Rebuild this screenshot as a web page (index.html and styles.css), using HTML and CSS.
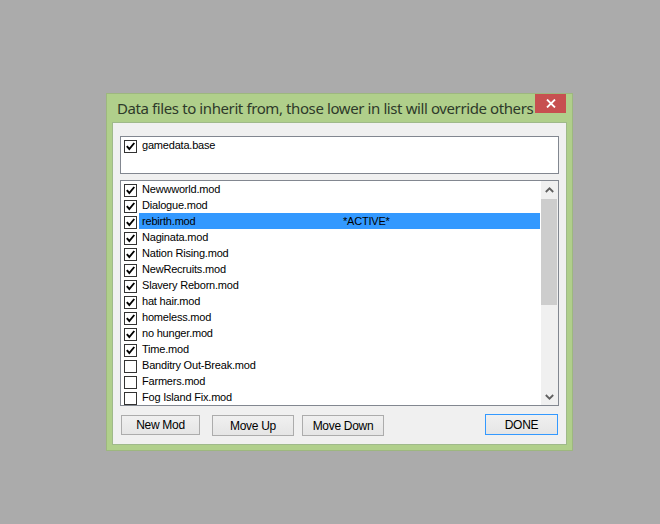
FILE: index.html
```html
<!DOCTYPE html>
<html>
<head>
<meta charset="utf-8">
<title>Data files</title>
<link rel="stylesheet" href="styles.css">
</head>
<body>
<div class="window">
  <div class="titlebar">
    <span class="title">Data files to inherit from, those lower in list will override others</span>
    <span class="close"><svg width="10" height="9" viewBox="0 0 10 9"><path d="M1 0.5 L9 8.5 M9 0.5 L1 8.5" stroke="#fff" stroke-width="1.8" fill="none"/></svg></span>
  </div>
  <div class="client">
    <div class="listbox base">
      <div class="row"><span class="cb"><svg width="11" height="11" viewBox="0 0 11 11"><path d="M1.8 5.2 L4.3 8 L9.3 2" stroke="#000" stroke-width="1.9" fill="none"/></svg></span><span class="label"><span class="name">gamedata.base</span></span></div>
    </div>
    <div class="listbox mods">
      <div class="rows">
        <div class="row"><span class="cb"><svg width="11" height="11" viewBox="0 0 11 11"><path d="M1.8 5.2 L4.3 8 L9.3 2" stroke="#000" stroke-width="1.9" fill="none"/></svg></span><span class="label"><span class="name">Newwworld.mod</span></span></div>
        <div class="row"><span class="cb"><svg width="11" height="11" viewBox="0 0 11 11"><path d="M1.8 5.2 L4.3 8 L9.3 2" stroke="#000" stroke-width="1.9" fill="none"/></svg></span><span class="label"><span class="name">Dialogue.mod</span></span></div>
        <div class="row"><span class="cb"><svg width="11" height="11" viewBox="0 0 11 11"><path d="M1.8 5.2 L4.3 8 L9.3 2" stroke="#000" stroke-width="1.9" fill="none"/></svg></span><span class="label selected"><span class="name">rebirth.mod</span><span class="status">*ACTIVE*</span></span></div>
        <div class="row"><span class="cb"><svg width="11" height="11" viewBox="0 0 11 11"><path d="M1.8 5.2 L4.3 8 L9.3 2" stroke="#000" stroke-width="1.9" fill="none"/></svg></span><span class="label"><span class="name">Naginata.mod</span></span></div>
        <div class="row"><span class="cb"><svg width="11" height="11" viewBox="0 0 11 11"><path d="M1.8 5.2 L4.3 8 L9.3 2" stroke="#000" stroke-width="1.9" fill="none"/></svg></span><span class="label"><span class="name">Nation Rising.mod</span></span></div>
        <div class="row"><span class="cb"><svg width="11" height="11" viewBox="0 0 11 11"><path d="M1.8 5.2 L4.3 8 L9.3 2" stroke="#000" stroke-width="1.9" fill="none"/></svg></span><span class="label"><span class="name">NewRecruits.mod</span></span></div>
        <div class="row"><span class="cb"><svg width="11" height="11" viewBox="0 0 11 11"><path d="M1.8 5.2 L4.3 8 L9.3 2" stroke="#000" stroke-width="1.9" fill="none"/></svg></span><span class="label"><span class="name">Slavery Reborn.mod</span></span></div>
        <div class="row"><span class="cb"><svg width="11" height="11" viewBox="0 0 11 11"><path d="M1.8 5.2 L4.3 8 L9.3 2" stroke="#000" stroke-width="1.9" fill="none"/></svg></span><span class="label"><span class="name">hat hair.mod</span></span></div>
        <div class="row"><span class="cb"><svg width="11" height="11" viewBox="0 0 11 11"><path d="M1.8 5.2 L4.3 8 L9.3 2" stroke="#000" stroke-width="1.9" fill="none"/></svg></span><span class="label"><span class="name">homeless.mod</span></span></div>
        <div class="row"><span class="cb"><svg width="11" height="11" viewBox="0 0 11 11"><path d="M1.8 5.2 L4.3 8 L9.3 2" stroke="#000" stroke-width="1.9" fill="none"/></svg></span><span class="label"><span class="name">no hunger.mod</span></span></div>
        <div class="row"><span class="cb"><svg width="11" height="11" viewBox="0 0 11 11"><path d="M1.8 5.2 L4.3 8 L9.3 2" stroke="#000" stroke-width="1.9" fill="none"/></svg></span><span class="label"><span class="name">Time.mod</span></span></div>
        <div class="row"><span class="cb"></span><span class="label"><span class="name">Banditry Out-Break.mod</span></span></div>
        <div class="row"><span class="cb"></span><span class="label"><span class="name">Farmers.mod</span></span></div>
        <div class="row"><span class="cb"></span><span class="label"><span class="name">Fog Island Fix.mod</span></span></div>
      </div>
      <div class="scrollbar">
        <div class="arrow"><svg width="9" height="6" viewBox="0 0 9 6"><path d="M0.8 5 L4.5 1.3 L8.2 5" stroke="#606060" stroke-width="1.8" fill="none"/></svg></div>
        <div class="track"><div class="thumb"></div></div>
        <div class="arrow"><svg width="9" height="6" viewBox="0 0 9 6"><path d="M0.8 1 L4.5 4.7 L8.2 1" stroke="#606060" stroke-width="1.8" fill="none"/></svg></div>
      </div>
    </div>
    <div class="buttons">
      <span class="btn newmod">New Mod</span>
      <span class="btn move moveup">Move Up</span>
      <span class="btn move movedown">Move Down</span>
      <span class="btn done">DONE</span>
    </div>
  </div>
</div>
</body>
</html>
```
FILE: styles.css
```css
* { box-sizing: border-box; }
html, body { margin: 0; }
body {
  background: #ababab;
  height: 524px;
  padding: 93px 0 0 106px;
  font-family: "Liberation Sans", Arial, sans-serif;
}
.window {
  width: 467px;
  border: 1px solid #9db77f;
  background: #b0cf8b;
  padding: 0 5px 5px 5px;
}
.titlebar {
  height: 28px;
  display: flex;
  align-items: flex-start;
  justify-content: space-between;
  padding: 0 1px 0 5px;
}
.title {
  font-family: "Noto Sans", sans-serif;
  font-size: 15px;
  letter-spacing: -0.4px;
  line-height: 20px;
  margin-top: 4px;
  color: #2e3a2a;
  white-space: nowrap;
}
.close {
  flex-shrink: 0;
  width: 31px;
  height: 19px;
  background: #c75050;
  display: flex;
  align-items: center;
  justify-content: center;
}
.client {
  border: 1px solid #9fb98a;
  background: #f0f0f0;
  padding: 13px 7px 8px 7px;
}
.listbox {
  border: 1px solid #828790;
  background: #fff;
}
.base { height: 38px; }
.mods {
  height: 226px;
  margin-top: 6px;
  display: flex;
}
.rows { flex: 1; }
.row {
  display: flex;
  height: 16px;
  font-size: 11px;
  letter-spacing: -0.2px;
  line-height: 16px;
  color: #000;
}
.cb {
  width: 13px;
  height: 13px;
  margin: 3px 2px 0 3px;
  border: 1px solid #333;
  background: #fff;
  display: flex;
  align-items: center;
  justify-content: center;
}
.label {
  flex: 1;
  display: flex;
  padding-left: 3px;
  margin-right: 1px;
  white-space: nowrap;
}
.selected { background: #3399ff; }
.name { width: 201px; }
.scrollbar {
  width: 17px;
  background: #f0f0f0;
  display: flex;
  flex-direction: column;
}
.arrow {
  height: 17px;
  display: flex;
  align-items: center;
  justify-content: center;
  padding-right: 1px;
}
.track { flex: 1; padding-top: 1px; }
.thumb {
  width: 16px;
  height: 106px;
  background: #cdcdcd;
}
.buttons {
  display: flex;
  align-items: flex-start;
  margin-top: 8px;
  padding: 0 1px;
  height: 22px;
}
.btn {
  display: flex;
  align-items: center;
  justify-content: center;
  border: 1px solid #acacac;
  background: linear-gradient(#f0f0f0, #e5e5e5);
  font-size: 12px;
  letter-spacing: -0.3px;
  color: #000;
  height: 21px;
}
.newmod { width: 79px; height: 20px; margin-top: 1px; }
.move { width: 82px; margin-top: 1px; }
.moveup { margin-left: 12px; }
.movedown { margin-left: 8px; }
.done {
  width: 73px;
  margin-left: auto;
  border-color: #3399ff;
}
```
